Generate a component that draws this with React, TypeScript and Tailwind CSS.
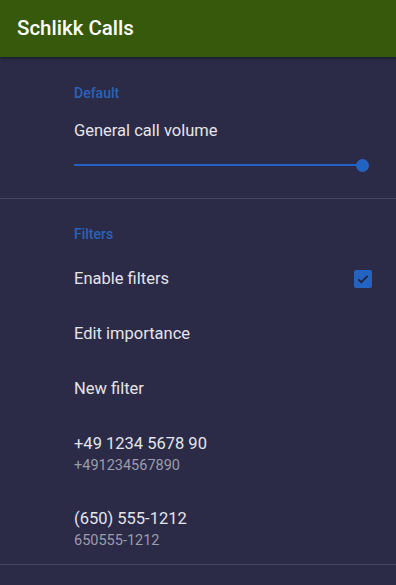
const font = { fontFamily: 'Roboto, "Noto Sans", sans-serif' };

function Row({ title }: { title: string }) {
  return (
    <div className="flex h-[55px] items-center pl-[74px] pr-6 pt-[2px]">
      <span className="text-[16.5px] text-[#e4e4ea]">{title}</span>
    </div>
  );
}

function NumberRow({ title, sub }: { title: string; sub: string }) {
  return (
    <div className="flex h-[75px] flex-col pl-[74px] pt-[16px]">
      <span className="text-[16.5px] leading-6 text-[#e4e4ea]">{title}</span>
      <span className="text-[14.5px] leading-5 text-[#9c9cab]">{sub}</span>
    </div>
  );
}

export default function App() {
  return (
    <div className="h-[585px] w-[396px] overflow-hidden bg-[#2b2b47]" style={font}>
      <header className="relative z-10 flex h-[57px] items-center bg-[#36590b] pl-[17px] shadow-[0_1px_3px_rgba(0,0,0,0.5)]">
        <h1 className="text-[20.5px] font-medium text-white">Schlikk Calls</h1>
      </header>

      <section className="pb-[21px] pl-[74px] pr-[27px] pt-[26px]">
        <div className="text-[14px] font-medium leading-5 text-[#2a63b8]">Default</div>
        <div className="mt-4 text-[16.5px] leading-6 text-[#e4e4ea]">General call volume</div>
        <div className="mt-[10px] flex h-6 items-center">
          <div className="h-[2px] flex-1 bg-[#2363c2]" />
          <div className="-ml-1 h-[13px] w-[13px] rounded-full bg-[#2363c2]" />
        </div>
      </section>

      <div className="h-px bg-[#45455f]" />

      <section>
        <div className="pl-[74px] pt-[25px] text-[14px] font-medium leading-5 text-[#2a63b8]">Filters</div>
        <div className="h-[7px]" />
        <div className="flex h-[55px] items-center justify-between pl-[74px] pr-[24px]">
          <span className="pt-[2px] text-[16.5px] text-[#e4e4ea]">Enable filters</span>
          <span className="flex h-[18px] w-[18px] items-center justify-center rounded-[2px] bg-[#2363c2]">
            <svg width="14" height="14" viewBox="0 0 24 24" fill="none">
              <path d="M4 12.5l5 5L20 6.5" stroke="#22223a" strokeWidth="3" />
            </svg>
          </span>
        </div>
        <Row title="Edit importance" />
        <Row title="New filter" />
        <NumberRow title="+49 1234 5678 90" sub="+491234567890" />
        <NumberRow title="(650) 555-1212" sub="650555-1212" />
      </section>

      <div className="-mt-[2px] h-px bg-[#45455f]" />
    </div>
  );
}
